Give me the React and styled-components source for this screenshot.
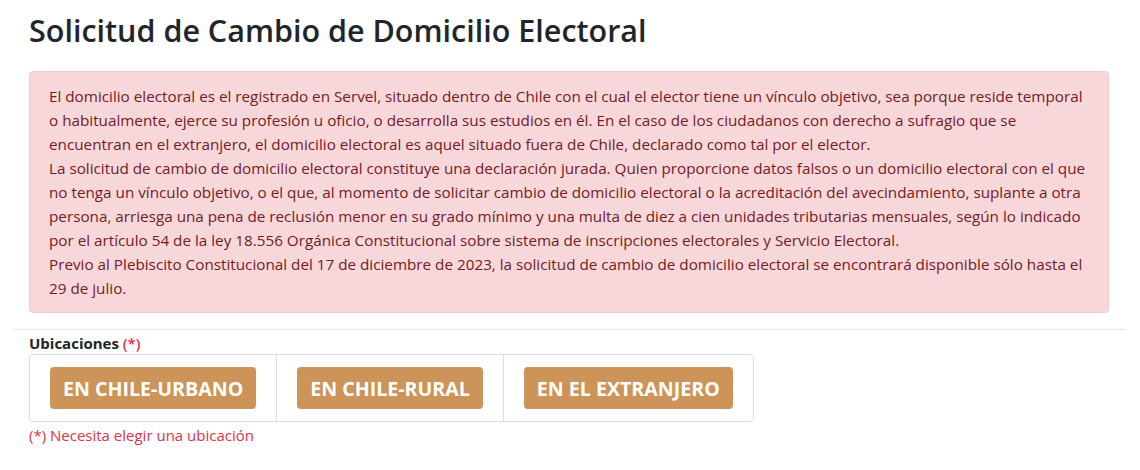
import React from "react";
import styled, { createGlobalStyle } from "styled-components";

const GlobalStyle = createGlobalStyle`
  body {
    margin: 0;
    background: #fff;
    font-family: "Open Sans", "Noto Sans", sans-serif;
    color: #212529;
  }
`;

const Page = styled.div`
  width: 1140px;
  padding: 0 14px;
  box-sizing: border-box;
`;

const Content = styled.div`
  padding: 0 17px 0 15px;
`;

const Title = styled.h2`
  margin: 0;
  padding-top: 11px;
  font-size: 30.5px;
  font-weight: 600;
  line-height: 38px;
  color: #212529;
`;

const Alert = styled.div`
  margin-top: 22px;
  padding: 12px 19px 12px;
  background: #f8d7da;
  border: 1px solid #f5c6cb;
  border-radius: 4px;
  color: #721c24;
  font-size: 15.25px;
  line-height: 24px;
`;

const Line = styled.span`
  display: block;
  white-space: nowrap;
`;

const Rule = styled.hr`
  margin: 16px 0 0;
  border: 0;
  border-top: 1px solid #e5e5e5;
`;

const Label = styled.div`
  padding: 3px 15px 0;
  font-size: 15px;
  font-weight: 700;
  line-height: 20px;
  color: #212529;
`;

const Required = styled.span`
  color: #dc3545;
  font-weight: 600;
`;

const Group = styled.div`
  margin: 1px 0 0 15px;
  display: inline-flex;
  border: 1px solid #dddddd;
  border-radius: 4px;
`;

const Cell = styled.div`
  padding: 12px 20px;
  border-left: ${(p) => (p.$first ? "none" : "1px solid #dddddd")};
`;

const Choice = styled.button`
  height: 42px;
  padding: 0 13px;
  border: 0;
  border-radius: 4px;
  background: #cc9458;
  color: #fff;
  font-family: "Open Sans", "Noto Sans", sans-serif;
  font-size: 19.6px;
  font-weight: 700;
  cursor: pointer;
`;

const Help = styled.div`
  padding: 3px 15px 0;
  font-size: 15px;
  line-height: 20px;
  color: #dc3545;
`;

const lines = [
  "El domicilio electoral es el registrado en Servel, situado dentro de Chile con el cual el elector tiene un vínculo objetivo, sea porque reside temporal",
  "o habitualmente, ejerce su profesión u oficio, o desarrolla sus estudios en él. En el caso de los ciudadanos con derecho a sufragio que se",
  "encuentran en el extranjero, el domicilio electoral es aquel situado fuera de Chile, declarado como tal por el elector.",
  "La solicitud de cambio de domicilio electoral constituye una declaración jurada. Quien proporcione datos falsos o un domicilio electoral con el que",
  "no tenga un vínculo objetivo, o el que, al momento de solicitar cambio de domicilio electoral o la acreditación del avecindamiento, suplante a otra",
  "persona, arriesga una pena de reclusión menor en su grado mínimo y una multa de diez a cien unidades tributarias mensuales, según lo indicado",
  "por el artículo 54 de la ley 18.556 Orgánica Constitucional sobre sistema de inscripciones electorales y Servicio Electoral.",
  "Previo al Plebiscito Constitucional del 17 de diciembre de 2023, la solicitud de cambio de domicilio electoral se encontrará disponible sólo hasta el",
  "29 de julio.",
];

const options = ["EN CHILE-URBANO", "EN CHILE-RURAL", "EN EL EXTRANJERO"];

export default function App() {
  return (
    <>
      <GlobalStyle />
      <Page>
        <Content>
          <Title>Solicitud de Cambio de Domicilio Electoral</Title>
          <Alert>
            {lines.map((l, i) => (
              <Line key={i}>{l}</Line>
            ))}
          </Alert>
        </Content>
        <Rule />
        <Label>
          Ubicaciones <Required>(*)</Required>
        </Label>
        <Group>
          {options.map((o, i) => (
            <Cell key={o} $first={i === 0}>
              <Choice type="button">{o}</Choice>
            </Cell>
          ))}
        </Group>
        <Help>(*) Necesita elegir una ubicación</Help>
      </Page>
    </>
  );
}
